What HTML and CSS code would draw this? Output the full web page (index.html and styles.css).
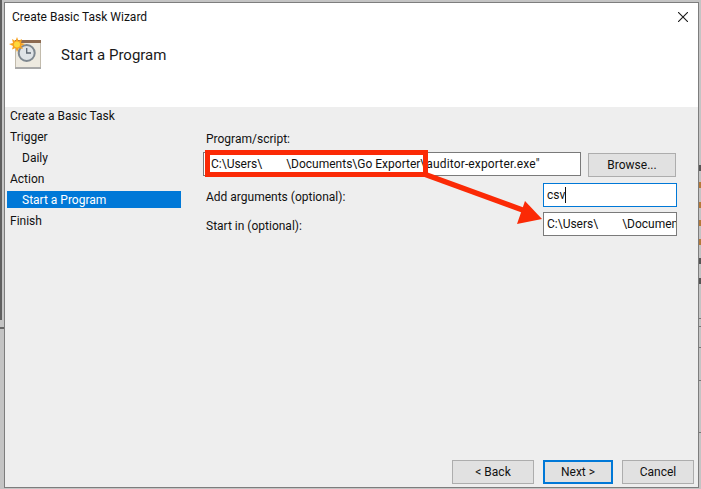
FILE: index.html
```html
<!DOCTYPE html>
<html lang="en">
<head>
<meta charset="utf-8">
<title>Create Basic Task Wizard</title>
<link rel="stylesheet" href="styles.css">
</head>
<body>
<div class="behind">
  <span class="edge-left-dark"></span>
  <span class="edge-left-light"></span>
  <span class="tick tick-a"></span>
  <span class="tick tick-b"></span>
  <span class="tick tick-c"></span>
  <span class="tick tick-d"></span>
  <span class="mark mark-a"></span>
  <span class="mark mark-b"></span>
  <span class="mark mark-c"></span>
  <span class="rule rule-a"></span>
  <span class="rule rule-b"></span>
  <span class="rule rule-c"></span>
  <span class="rule rule-d"></span>
  <span class="rule rule-e"></span>
</div>
<div class="window">
  <header class="header">
    <div class="titlebar">
      <span class="title">Create Basic Task Wizard</span>
      <svg class="close" width="10" height="10" viewBox="0 0 10 10"><path d="M0 0L10 10M10 0L0 10" stroke="#1a1a1a" stroke-width="1.1" fill="none"/></svg>
    </div>
    <div class="heading">
      <svg class="task-icon" width="33" height="32" viewBox="0 0 33 32">
        <path d="M5.500 2.500H30.500V28.500H5.500Z" fill="#eeeae0" stroke="#c2bbac"/>
        <path d="M5 1H31V4H5Z" fill="#8d6a50"/>
        <path d="M5 28H31V30H5Z" fill="#a9a9a9"/>
        <circle cx="16.700" cy="14" r="8" fill="#dfe3e6" stroke="#7f8890" stroke-width="2"/>
        <path d="M16.700 9V14H21" fill="none" stroke="#5c6670" stroke-width="1.300"/>
        <path d="M7 -2L8.500 2L12 0L11 4L15 5L11 7L13 10L9 9L7 13L5.500 9L2 10.500L3 7L-1 5L3 4L2 0L5.500 2Z" fill="#f7a11f"/>
        <circle cx="7" cy="5.500" r="3" fill="#ffd83a"/>
      </svg>
      <h1 class="page-title">Start a Program</h1>
    </div>
  </header>
  <div class="body">
    <nav class="nav">
      <div class="step first">Create a Basic Task</div>
      <div class="step">Trigger</div>
      <div class="step sub">Daily</div>
      <div class="step">Action</div>
      <div class="step sub selected">Start a Program</div>
      <div class="step">Finish</div>
    </nav>
    <main class="content">
      <div class="form">
        <div class="label program-label">Program/script:</div>
        <div class="program-row">
          <div class="field program-field">C:\Users\<span class="gap"></span>\Documents\Go Exporter\<span class="tail">auditor-exporter.exe"</span></div>
          <div class="button browse">Browse...</div>
        </div>
        <div class="option-row">
          <div class="label">Add arguments (optional):</div>
          <div class="field short focused">csv<span class="caret"></span></div>
        </div>
        <div class="option-row">
          <div class="label">Start in (optional):</div>
          <div class="field short clipped">C:\Users\<span class="gap"></span>\Documents\Go Exporter</div>
        </div>
      </div>
      <footer class="footer">
        <div class="button back">&lt; Back</div>
        <div class="button next">Next &gt;</div>
        <div class="button cancel">Cancel</div>
      </footer>
    </main>
  </div>
</div>
<svg class="annotation" width="701" height="489" viewBox="0 0 701 489">
  <rect x="207.500" y="152.500" width="218" height="22" fill="none" stroke="#fb2a06" stroke-width="5"/>
  <path d="M424 174L528 212" stroke="#fb2a06" stroke-width="5.500" fill="none"/>
  <path d="M542 219L525 201L517 224Z" fill="#fb2a06"/>
</svg>
</body>
</html>
```
FILE: styles.css
```css
* { box-sizing: border-box; }
html, body { margin: 0; height: 100%; }
body {
  width: 701px;
  height: 489px;
  overflow: hidden;
  background: #c4c4c4;
  font-family: Roboto, "Noto Sans", "Liberation Sans", sans-serif;
  font-size: 12px;
  color: #111;
  padding: 2px 2px 1px 4px;
  position: relative;
}
.window {
  height: 486px;
  border: 1px solid #7d7d7d;
  background: #eeeeee;
  display: flex;
  flex-direction: column;
  position: relative;
}
.header { height: 104px; background: #fff; }
.titlebar {
  display: flex;
  justify-content: space-between;
  align-items: center;
  height: 27px;
  padding: 3px 10px 3px 7px;
}
.heading { display: flex; align-items: center; height: 32px; padding-left: 5px; margin-top: 9px; }
.task-icon { flex: none; overflow: visible; }
.page-title { margin: 0 0 0 18px; font-size: 15px; font-weight: 400; color: #1a1a1a; }
.body { flex: 1; display: flex; min-height: 0; }
.nav { width: 176px; flex: none; }
.step { height: 21px; margin-left: 2px; padding-left: 3px; display: flex; align-items: center; }
.first { height: 19px; padding-bottom: 2px; }
.sub { padding-left: 15px; }
.selected { background: #0078d7; color: #fff; height: 17px; margin-top: 2px; margin-bottom: 2px; }
.content { flex: 1; display: flex; flex-direction: column; justify-content: space-between; padding: 0 4px 3px 22px; min-width: 0; }
.form { padding-top: 24px; }
.label { line-height: 16px; padding-left: 3px; }
.program-label { margin-bottom: 5px; }
.program-row { display: flex; gap: 7px; padding-right: 17px; align-items: flex-start; }
.field {
  height: 24px;
  line-height: 22px;
  background: #fff;
  border: 1px solid #7a7a7a;
  padding: 0 3px;
  white-space: nowrap;
  overflow: hidden;
}
.program-field { width: 378px; padding-left: 7px; }
.gap { display: inline-block; width: 24px; }
.tail { margin-left: 1px; letter-spacing: 0.15px; }
.button {
  height: 24px;
  line-height: 22px;
  text-align: center;
  background: #e1e1e1;
  border: 1px solid #adadad;
}
.browse { width: 88px; margin-top: 1px; }
.option-row {
  display: flex;
  justify-content: space-between;
  align-items: center;
  height: 24px;
  margin-top: 5px;
  padding-right: 17px;
}
.option-row .label { padding-top: 3px; }
.program-row + .option-row { margin-top: 6px; }
.short { width: 134px; }
.focused { border-color: #0078d7; }
.caret { display: inline-block; width: 1px; height: 16px; background: #111; vertical-align: -4px; }
.footer { display: flex; justify-content: flex-end; gap: 9px; }
.back { width: 82px; }
.next { width: 70px; border: 2px solid #0078d7; line-height: 20px; }
.cancel { width: 72px; }
.annotation { position: absolute; left: 0; top: 0; pointer-events: none; }
.behind { position: absolute; inset: 0; }
.behind span { position: absolute; display: block; }
.edge-left-dark { left: 0; top: 0; width: 2px; height: 320px; background: #5f5f5f; }
.edge-left-light { left: 0; top: 327px; width: 4px; height: 2px; background: #666; }
.tick { left: 699px; width: 2px; height: 6px; background: #b4793a; }
.tick-a { top: 182px; }
.tick-b { top: 202px; }
.tick-c { top: 220px; }
.tick-d { top: 239px; }
.mark { left: 699px; width: 2px; height: 6px; background: #555; }
.mark-a { top: 165px; }
.mark-b { top: 258px; }
.mark-c { top: 278px; }
.rule { left: 699px; width: 2px; height: 1px; background: #777; }
.rule-a { top: 318px; }
.rule-b { top: 326px; }
.rule-c { top: 347px; }
.rule-d { top: 380px; }
.rule-e { top: 432px; }
```
